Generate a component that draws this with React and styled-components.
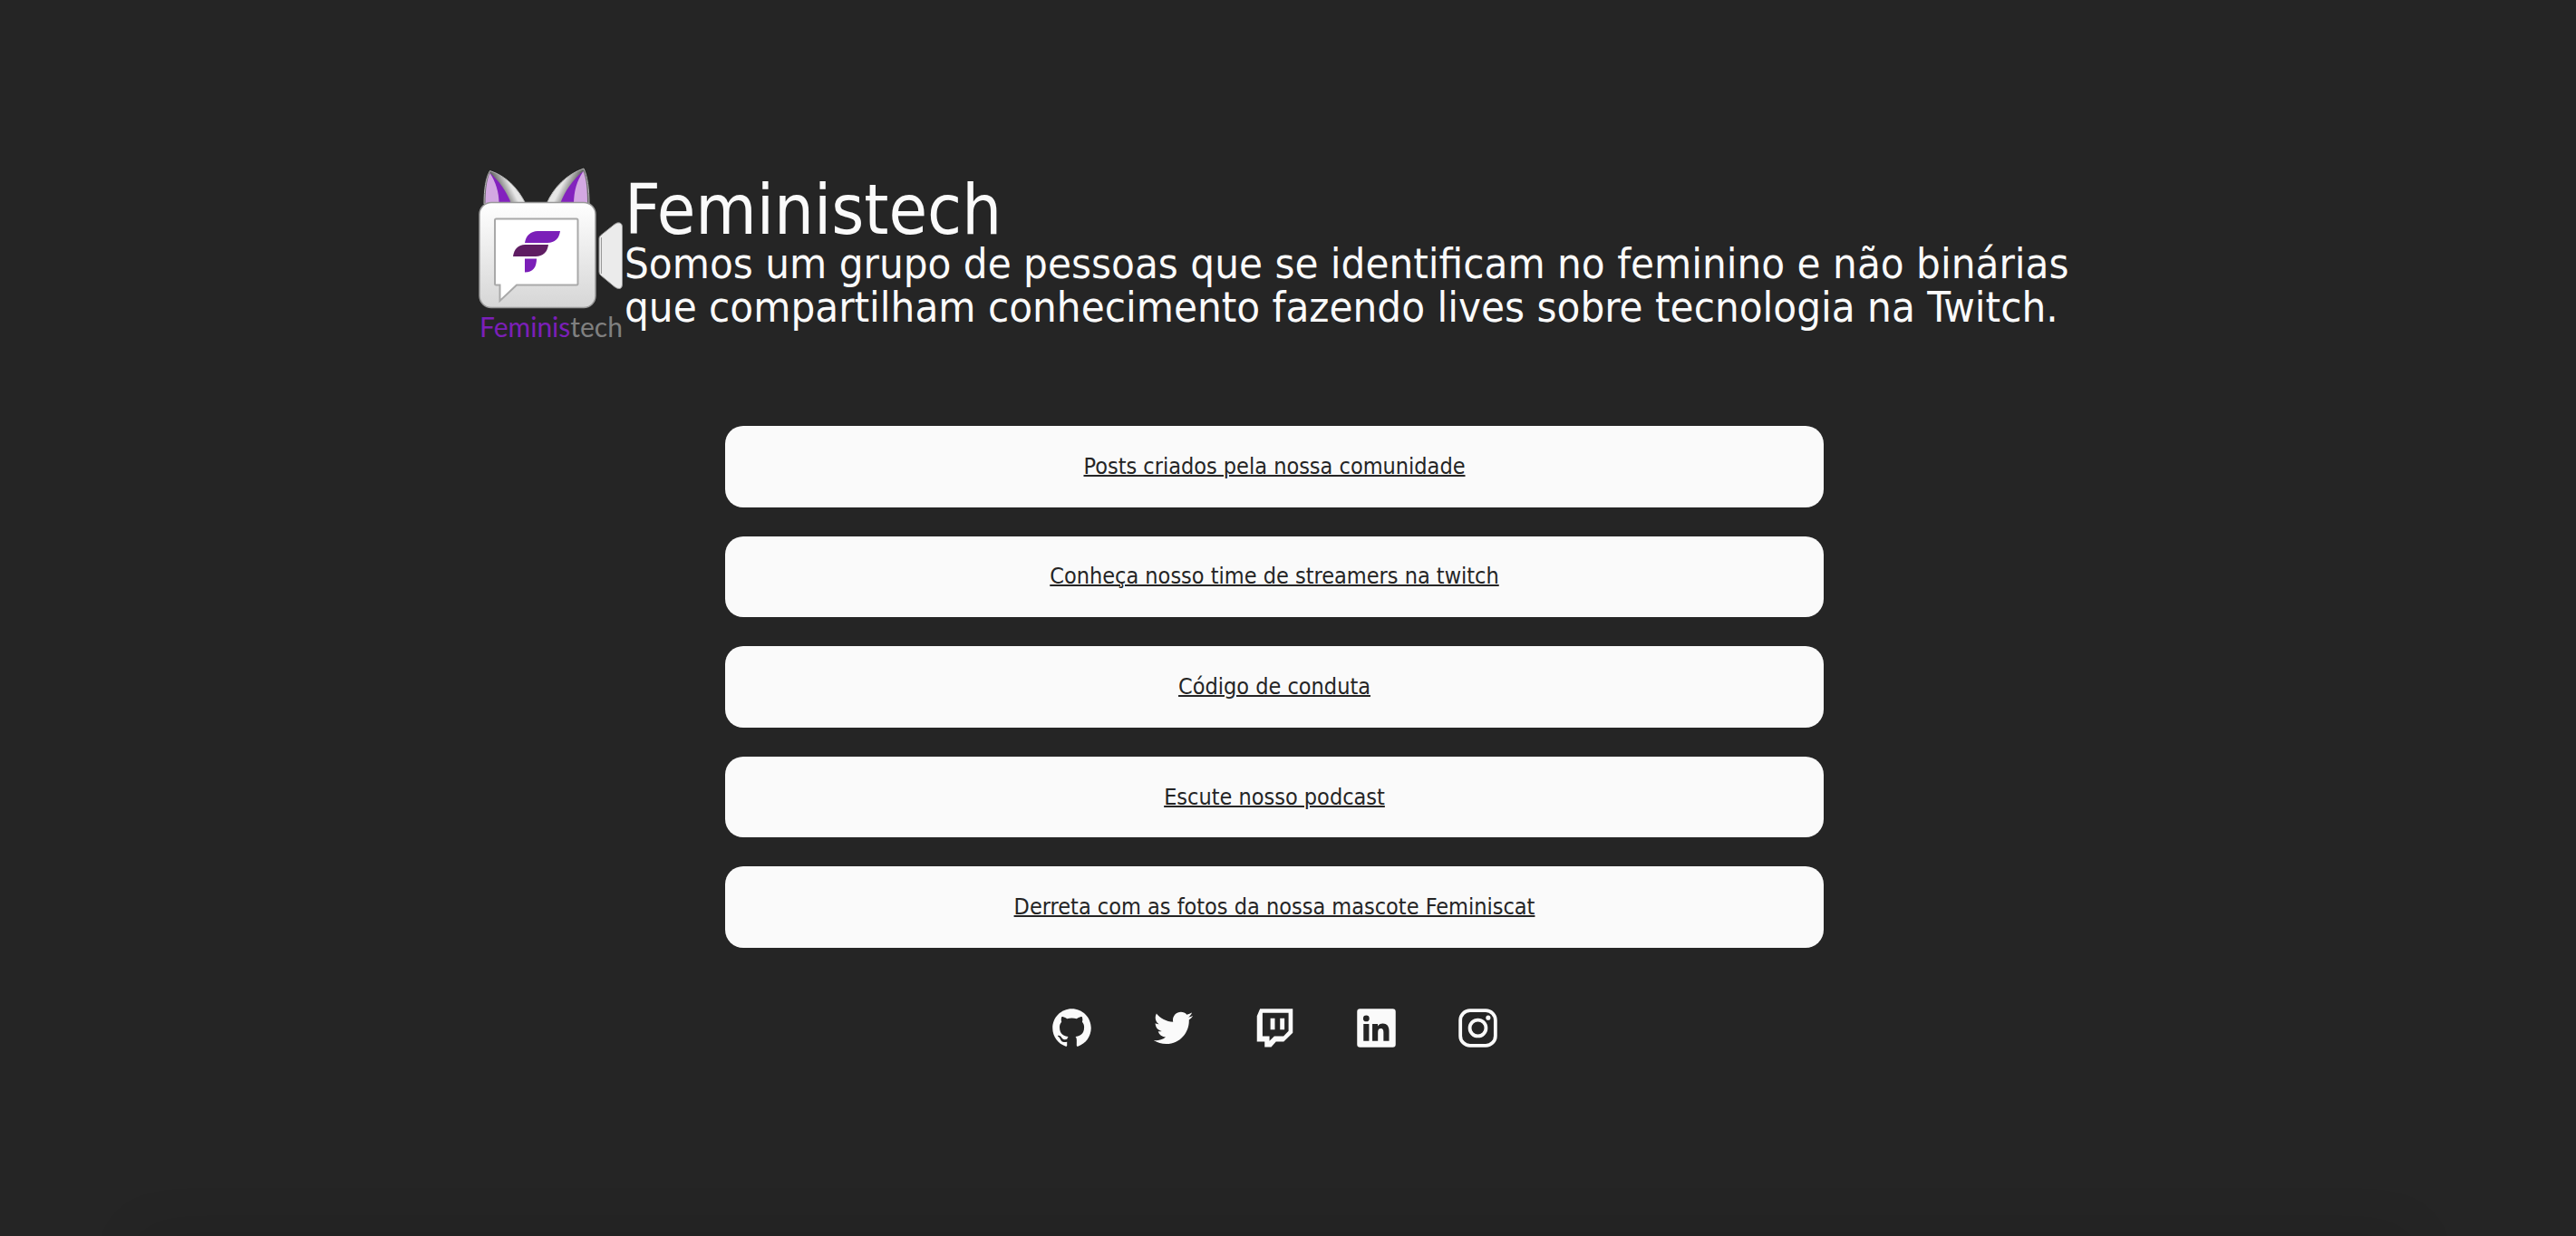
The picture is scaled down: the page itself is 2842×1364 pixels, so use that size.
import React from "react";
import styled, { createGlobalStyle } from "styled-components";
import { RiGithubFill, RiTwitterFill } from "react-icons/ri";

const GlobalStyle = createGlobalStyle`
  *, *::before, *::after { box-sizing: border-box; margin: 0; padding: 0; }
  body {
    background: #252525;
    color: #fafafa;
    font-family: Tahoma, "DejaVu Sans Condensed", "DejaVu Sans", sans-serif;
  }
`;

const Page = styled.div`
  position: relative;
  min-height: 100vh;
  padding: 180px 30px 0 0;
  overflow: hidden;
  display: flex;
  flex-direction: column;
  align-items: center;
`;

const Header = styled.header`
  display: flex;
  align-items: center;
  width: 100%;
  max-width: 1756px;
`;

const Logo = styled.svg`
  flex: none;
  width: 161px;
  height: 200px;
`;

const Title = styled.h1`
  font-size: 77px;
  font-weight: 400;
  line-height: 70px;
`;

const Lead = styled.p`
  font-size: 47px;
  line-height: 48px;
`;

const Links = styled.ul`
  display: grid;
  grid-auto-rows: 1fr;
  gap: 32px;
  width: 100%;
  max-width: 1212px;
  height: 576px;
  margin-top: 90px;
  list-style: none;
`;

const LinkButton = styled.a`
  display: flex;
  align-items: center;
  justify-content: center;
  height: 100%;
  border-radius: 20px;
  background: #fafafa;
  color: #252525;
  font-size: 25px;
  line-height: 32px;
  text-decoration: underline;
  text-decoration-thickness: 2px;
`;

const Social = styled.nav`
  display: flex;
  gap: 61px;
  margin-top: 63px;
`;

const SocialLink = styled.a`
  display: flex;
  color: #fafafa;
  font-size: 51px;
`;

const Glyph = styled.svg`
  width: 1em;
  height: 1em;
  fill: currentColor;
`;

const FooterShade = styled.div`
  position: absolute;
  left: 156px;
  right: 186px;
  top: 100%;
  height: 120px;
  box-shadow: 0 0 60px rgba(0, 0, 0, 0.12);
`;

function TwitchIcon() {
  return (
    <Glyph viewBox="0 0 24 24" fillRule="evenodd">
      <path d="M4.300 2H21.300V14.500L16.600 19H12.600L10.100 21.900H6.700V19H2.700V5.800ZM5.600 4.100V16.200H9.200V18.700L11.700 16.200H16.500L19.100 13.500V4.100ZM9.700 6.900H12V12.800H9.700ZM14.700 6.900H17V12.800H14.700Z" />
    </Glyph>
  );
}

function LinkedinIcon() {
  return (
    <Glyph viewBox="0 0 24 24" fillRule="evenodd">
      <path d="M3.500 2H20.500Q22 2 22 3.500V20.500Q22 22 20.500 22H3.500Q2 22 2 20.500V3.500Q2 2 3.500 2ZM5.300 9.900V18.700H8.200V9.900ZM6.750 5.400A1.600 1.600 0 1 0 6.750 8.600A1.600 1.600 0 1 0 6.750 5.400ZM9.900 9.900V18.700H12.800V14.200C12.800 12.900 13.300 12.200 14.300 12.200C15.300 12.200 15.700 12.900 15.700 14.200V18.700H18.600V13.600C18.600 11 17.400 9.700 15.400 9.700C14.100 9.700 13.200 10.300 12.700 11.100V9.900Z" />
    </Glyph>
  );
}

function InstagramIcon() {
  return (
    <Glyph viewBox="0 0 24 24">
      <rect x="2.900" y="2.900" width="18.200" height="18.200" rx="5" fill="none" stroke="currentColor" strokeWidth="1.800" />
      <circle cx="12" cy="12" r="4.200" fill="none" stroke="currentColor" strokeWidth="1.800" />
      <circle cx="17.350" cy="6.650" r="1.200" />
    </Glyph>
  );
}

const links = [
  "Posts criados pela nossa comunidade",
  "Conheça nosso time de streamers na twitch",
  "Código de conduta",
  "Escute nosso podcast",
  "Derreta com as fotos da nossa mascote Feminiscat",
];

const social = [
  ["GitHub", RiGithubFill],
  ["Twitter", RiTwitterFill],
  ["Twitch", TwitchIcon],
  ["LinkedIn", LinkedinIcon],
  ["Instagram", InstagramIcon],
];

function FeministechLogo() {
  return (
    <Logo viewBox="0 0 161 200" role="img" aria-label="Feministech">
      <defs>
        <linearGradient id="body" x1="0" y1="0" x2="0" y2="1">
          <stop offset="0" stopColor="#ffffff" />
          <stop offset="1" stopColor="#d6d6d6" />
        </linearGradient>
        <linearGradient id="earLeft" gradientUnits="userSpaceOnUse" x1="25" y1="32" x2="41" y2="24">
          <stop offset="0" stopColor="#6b6b6b" />
          <stop offset="0.7" stopColor="#e6e6e6" />
        </linearGradient>
        <linearGradient id="earRight" gradientUnits="userSpaceOnUse" x1="102" y1="32" x2="86" y2="24">
          <stop offset="0" stopColor="#6b6b6b" />
          <stop offset="0.7" stopColor="#e6e6e6" />
        </linearGradient>
      </defs>
      <path d="M6 45 C6 29 8 16 12.500 8.500 C30 14 43 27 52 45 Z" fill="url(#earLeft)" stroke="#b5b5b5" />
      <path d="M12.500 11 C22 19 31 31 36 45 H21 Z" fill="#8322be" />
      <path d="M7.500 45 C7.500 30 9 18 12.500 11 C19 21 22.500 32 22.500 45 Z" fill="#d3a8e2" />
      <path d="M122 45 C122 29 120 14 116 6 C98 12 83 26 75 45 Z" fill="url(#earRight)" stroke="#b5b5b5" />
      <path d="M115.500 9 C104 18 95 31 90 45 H107 Z" fill="#8322be" />
      <path d="M120 45 C120 30 119 17 115.500 9 C108 20 105 32 105 45 Z" fill="#d3a8e2" />
      <rect x="1" y="43.500" width="128" height="116" rx="13" fill="url(#body)" stroke="#999999" strokeWidth="1.500" />
      <path d="M18 63 Q18 61.500 19.500 61.500 H108 Q109.500 61.500 109.500 63 V133 Q109.500 134.500 108 134.500 H42 L23.500 152 V134.500 H19.500 Q18 134.500 18 133 Z" fill="#ffffff" stroke="#a9a9a9" strokeWidth="2" />
      <path d="M51 88 C52 80 58 75 65 75 H90 C89 83 84 88 76 88 Z" fill="#7b1fb8" />
      <path d="M38 103 C39 95 44 90 51 90 H77 C76 98 71 103 63 103 Z" fill="#5f1d63" />
      <path d="M51 105.500 H64 C64 115 60 120.500 51 120.500 Z" fill="#7b1fb8" />
      <path d="M133 83 Q133 81 135 79.500 L150 67.500 Q153 65 156 66 Q158.500 67 158.500 70 V134 Q158.500 137.500 156 138.500 Q153 139 150 136.500 L135 124 Q133 122.500 133 120 Z" fill="#ebebeb" stroke="#999999" />
      <path d="M135.500 82 V122" stroke="#999999" />
      <text x="1" y="192" fontFamily="Lato, sans-serif" fontSize="30" fill="#7b1fb8">
        Feminis<tspan fill="#808080">tech</tspan>
      </text>
    </Logo>
  );
}

export default function App() {
  return (
    <>
      <GlobalStyle />
      <Page>
        <Header>
          <FeministechLogo />
          <div>
            <Title>Feministech</Title>
            <Lead>
              Somos um grupo de pessoas que se identificam no feminino e não binárias que
              compartilham conhecimento fazendo lives sobre tecnologia na Twitch.
            </Lead>
          </div>
        </Header>
        <Links>
          {links.map((label) => (
            <li key={label}>
              <LinkButton href="#">{label}</LinkButton>
            </li>
          ))}
        </Links>
        <Social aria-label="Redes sociais">
          {social.map(([name, Icon]) => (
            <SocialLink key={name} href="#" aria-label={name}>
              <Icon />
            </SocialLink>
          ))}
        </Social>
        <FooterShade />
      </Page>
    </>
  );
}
